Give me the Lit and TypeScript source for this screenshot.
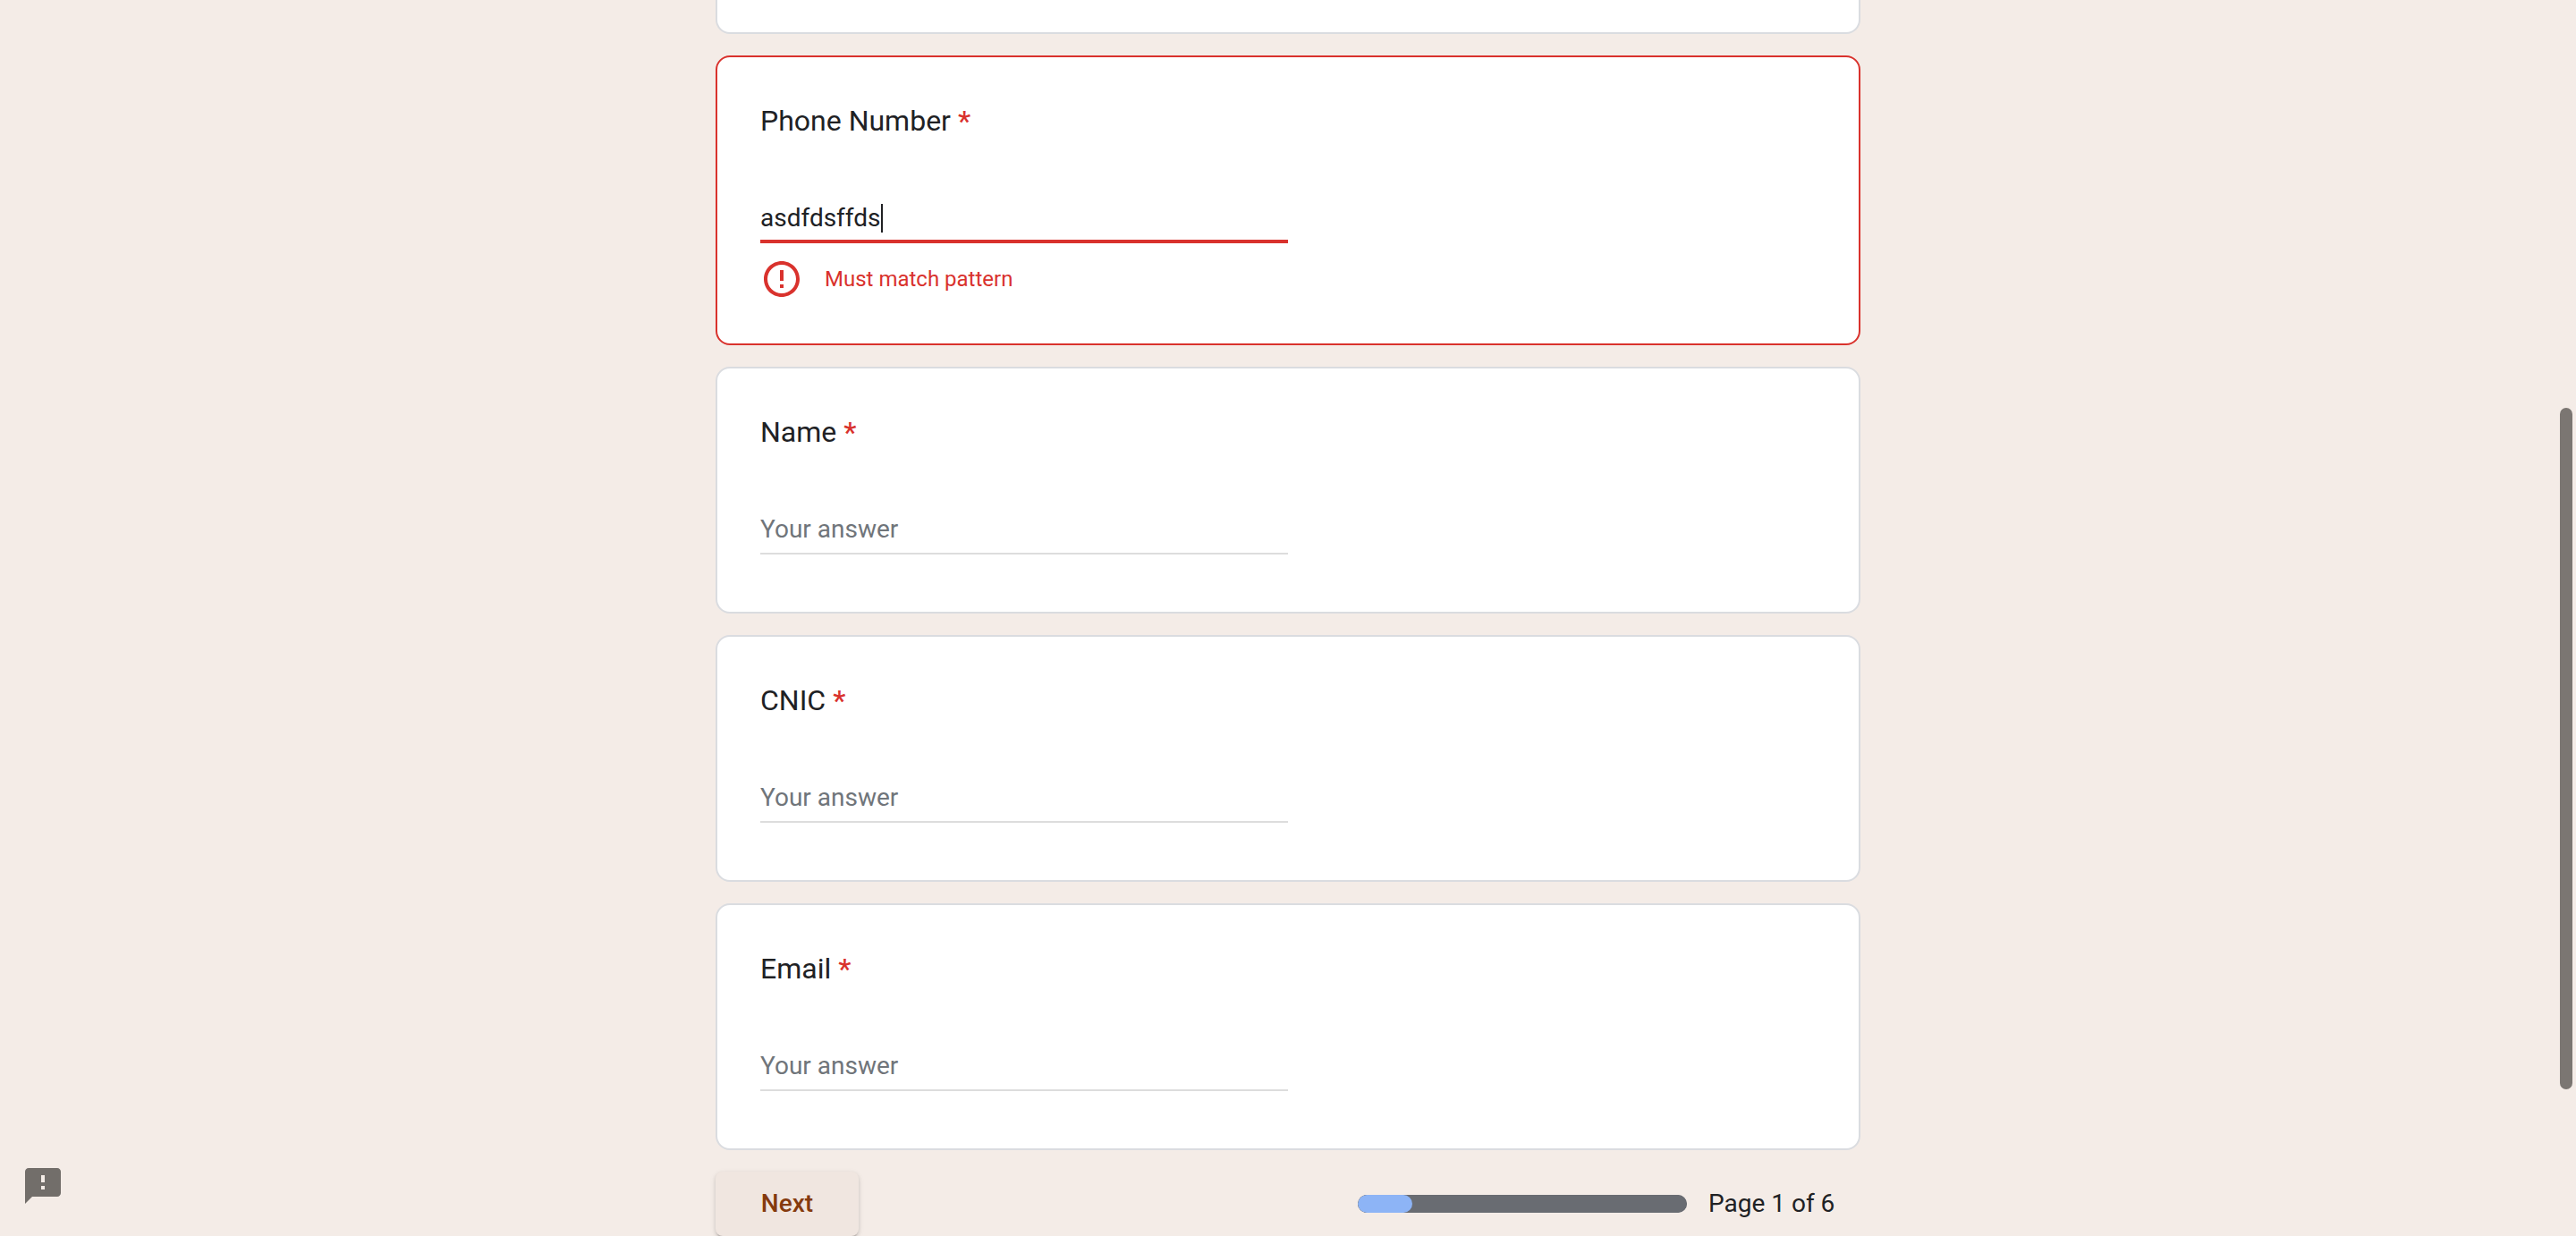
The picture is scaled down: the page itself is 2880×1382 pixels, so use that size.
import { LitElement, html, css, nothing } from "lit";
import { customElement, property, state } from "lit/decorators.js";

interface Question {
  id: string;
  title: string;
  type: string;
  value?: string;
  error?: string;
  active?: boolean;
}

@customElement("form-question")
class FormQuestion extends LitElement {
  @property({ attribute: false }) question!: Question;

  static styles = css`
    :host {
      display: block;
    }
    .card {
      box-sizing: border-box;
      padding: 48px 48px 64px;
      border: 2px solid #dadce0;
      border-radius: 16px;
      background: #fff;
    }
    .card.invalid {
      padding-bottom: 48px;
      border-color: #d9322d;
    }
    .title {
      display: block;
      margin-bottom: 18px;
      font-size: 32px;
      line-height: 46px;
      color: #202124;
    }
    .required {
      font-weight: 500;
      color: #d9322d;
    }
    .field {
      display: flex;
      box-sizing: border-box;
      width: 50%;
      height: 96px;
      padding-top: 52px;
      border-bottom: 2px solid #dddddd;
    }
    .invalid .field {
      border-bottom: 4px solid #d9322d;
    }
    .answer {
      flex: 1;
      min-width: 0;
      height: 32px;
      padding: 0;
      border: 0;
      outline: 0;
      background: transparent;
      font: 400 28px/32px Roboto, "Liberation Sans", sans-serif;
      color: #202124;
    }
    .answer::placeholder {
      color: #70757a;
      opacity: 1;
    }
    .answer.active {
      flex: none;
      max-width: 100%;
      field-sizing: content;
      caret-color: transparent;
    }
    .caret {
      width: 2px;
      height: 32px;
      background: #202124;
    }
    .error {
      display: flex;
      align-items: center;
      gap: 24px;
      margin-top: 16px;
      font-size: 24px;
      line-height: 32px;
      color: #d9322d;
    }
    .error svg {
      width: 48px;
      height: 48px;
      fill: currentColor;
    }
  `;

  render() {
    const q = this.question;
    return html`
      <section class="card ${q.error ? "invalid" : ""}">
        <label class="title" for=${q.id}>${q.title} <span class="required">*</span></label>
        <div class="field">
          <input
            class="answer ${q.active ? "active" : ""}"
            id=${q.id}
            type=${q.type}
            placeholder="Your answer"
            .value=${q.value ?? ""}
            aria-invalid=${q.error ? "true" : "false"}
            required
          />
          ${q.active ? html`<span class="caret"></span>` : nothing}
        </div>
        ${q.error
          ? html`<div class="error" role="alert">
              <svg viewBox="0 0 24 24" aria-hidden="true">
                <path d="M11 15h2v2h-2zm0-8h2v6h-2zm.99-5C6.47 2 2 6.48 2 12s4.47 10 9.99 10C17.52 22 22 17.52 22 12S17.52 2 11.99 2zM12 20c-4.42 0-8-3.58-8-8s3.58-8 8-8 8 3.58 8 8-3.58 8-8 8z"/>
              </svg>
              <span>${q.error}</span>
            </div>`
          : nothing}
      </section>
    `;
  }
}

@customElement("app-root")
class AppRoot extends LitElement {
  @state() private page = 1;
  @state() private pages = 6;
  @state() private questions: Question[] = [
    { id: "phone", title: "Phone Number", type: "text", value: "asdfdsffds", error: "Must match pattern", active: true },
    { id: "name", title: "Name", type: "text" },
    { id: "cnic", title: "CNIC", type: "text" },
    { id: "email", title: "Email", type: "text" },
  ];

  static styles = css`
    :host {
      display: block;
      box-sizing: border-box;
      min-height: 100vh;
      background: #f4ece7;
      font-family: Roboto, "Liberation Sans", sans-serif;
      color: #202124;
    }
    .form {
      display: flex;
      flex-direction: column;
      gap: 24px;
      max-width: 1280px;
      margin: 0 auto;
    }
    .previous {
      padding-top: 36px;
      border: 2px solid #dadce0;
      border-top: 0;
      border-radius: 0 0 16px 16px;
      background: #fff;
    }
    .footer {
      display: flex;
      align-items: center;
      justify-content: space-between;
      padding-right: 24px;
    }
    .next {
      min-width: 160px;
      height: 72px;
      padding: 0 48px;
      border: 0;
      border-radius: 8px;
      background: #f0e6e0;
      box-shadow: 0 4px 2px -2px rgba(0, 0, 0, 0.2), 0 2px 4px rgba(0, 0, 0, 0.14), 0 2px 8px rgba(0, 0, 0, 0.06);
      font: 500 28px/40px Roboto, "Liberation Sans", sans-serif;
      color: #853a0e;
    }
    .progress {
      display: flex;
      align-items: center;
      gap: 24px;
      font-size: 28px;
      line-height: 40px;
    }
    .count {
      min-width: 146px;
    }
    .bar {
      appearance: none;
      width: 368px;
      height: 20px;
      border: 0;
      border-radius: 10px;
      overflow: hidden;
      background: #696c72;
    }
    .bar::-webkit-progress-bar {
      border-radius: 10px;
      background: #696c72;
    }
    .bar::-webkit-progress-value {
      border-radius: 10px;
      background: #8db4f6;
    }
    .report {
      position: fixed;
      left: 24px;
      bottom: 32px;
      width: 48px;
      height: 48px;
      padding: 0;
      border: 0;
      background: transparent;
      color: #726e6a;
    }
    .report svg {
      display: block;
      fill: currentColor;
    }
    .thumb {
      position: fixed;
      top: 33vh;
      right: 4px;
      bottom: 164px;
      width: 14px;
      border-radius: 7px;
      background: #7b7672;
    }
  `;

  render() {
    return html`
      <main class="form">
        <div class="previous"></div>
        ${this.questions.map((q) => html`<form-question .question=${q}></form-question>`)}
        <div class="footer">
          <button class="next" type="button">Next</button>
          <div class="progress">
            <progress class="bar" id="progress" max=${this.pages} value=${this.page}></progress>
            <label class="count" for="progress">Page ${this.page} of ${this.pages}</label>
          </div>
        </div>
      </main>
      <button class="report" type="button" aria-label="Report a problem">
        <svg viewBox="0 0 24 24" width="48" height="48" aria-hidden="true">
          <path d="M20 2H4c-1.1 0-2 .9-2 2v18l4-4h14c1.1 0 2-.9 2-2V4c0-1.1-.9-2-2-2zm-7 12h-2v-2h2v2zm0-4h-2V6h2v4z"/>
        </svg>
      </button>
      <div class="thumb"></div>
    `;
  }
}
